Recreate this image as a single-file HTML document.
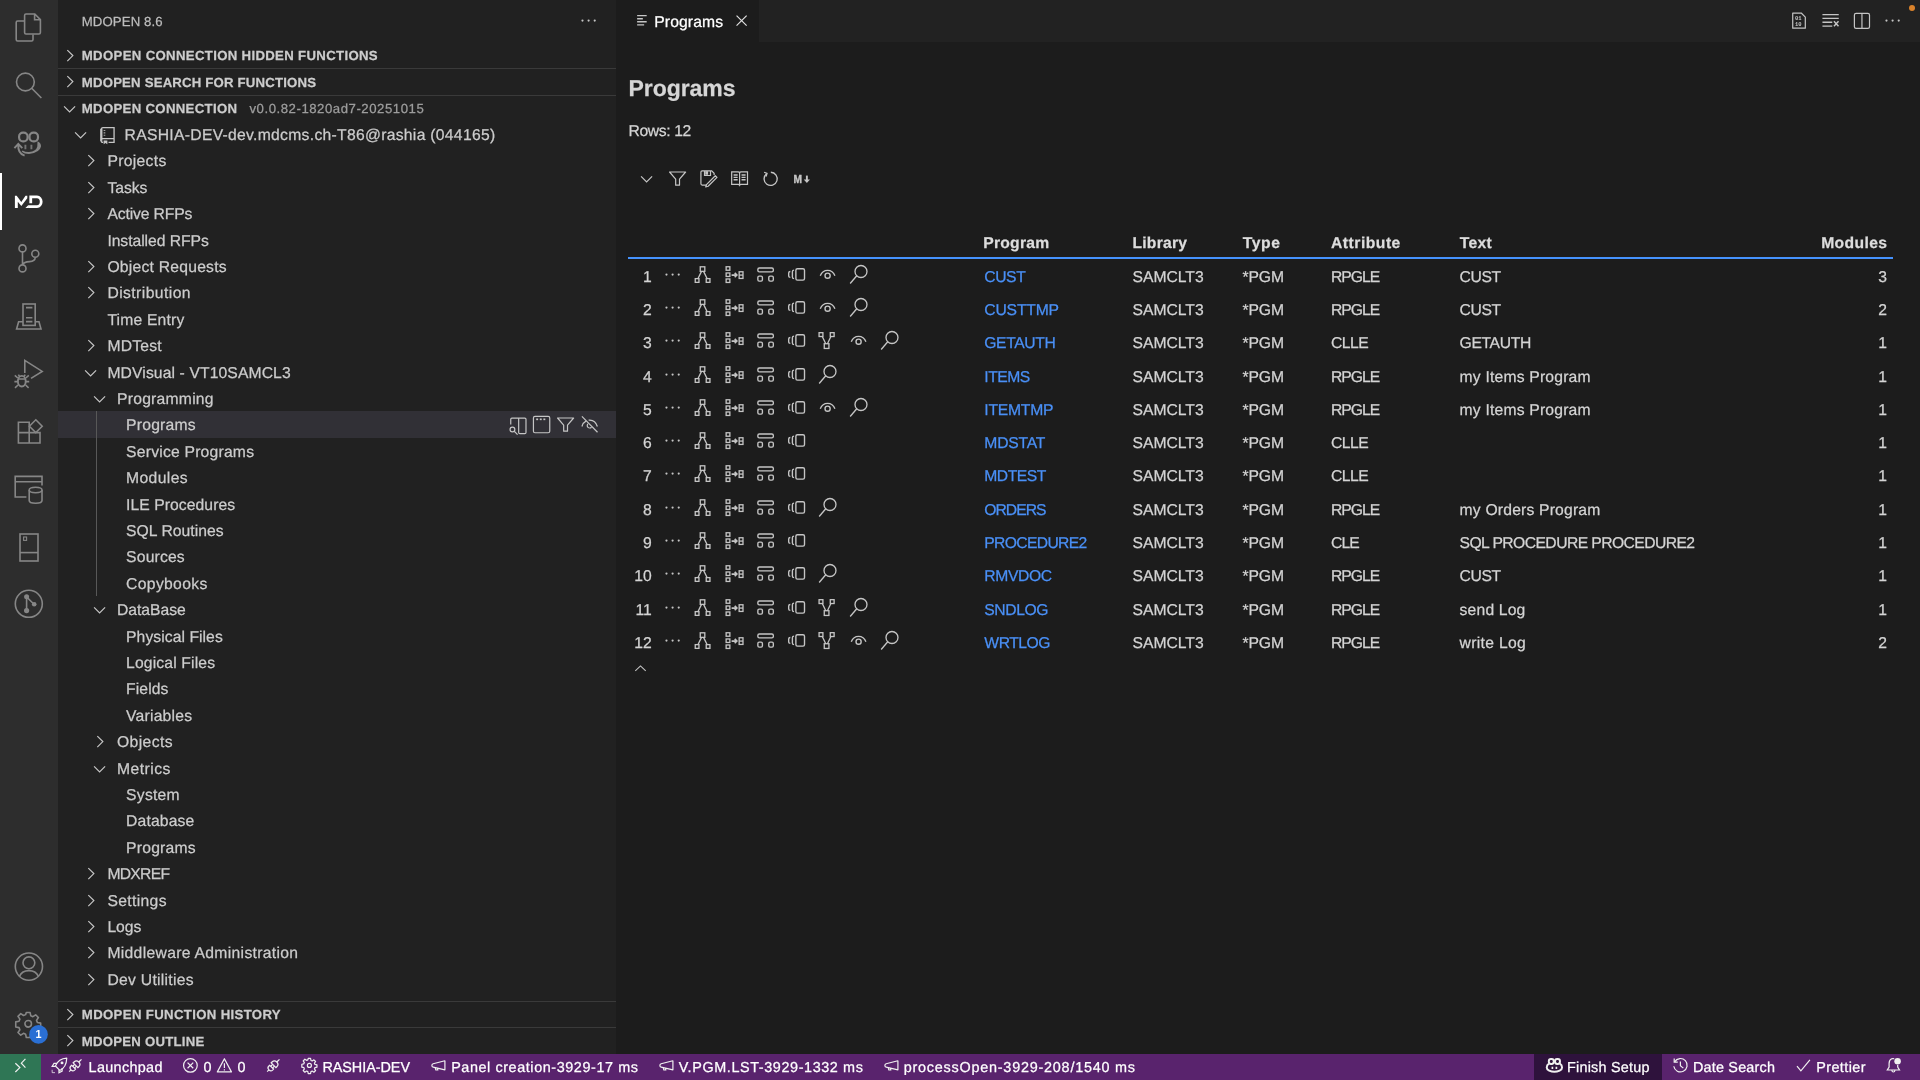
<!DOCTYPE html>
<html lang="en"><head><meta charset="utf-8"><title>Programs</title>
<style>
html,body{margin:0;padding:0;}
body{width:1920px;height:1080px;overflow:hidden;background:#1c1c1c;position:relative;font-family:"Liberation Sans",sans-serif;}
.b{position:absolute;}
.t{position:absolute;white-space:nowrap;line-height:24px;height:24px;}
.i{position:absolute;overflow:visible;}
svg{fill:none;stroke:currentColor;stroke-width:1;}
.f{fill:currentColor;stroke:none;}
#w{position:absolute;left:0;top:0;width:1920px;height:1080px;will-change:transform;}
.t{-webkit-text-stroke:0.25px currentColor;text-rendering:geometricPrecision;}
</style></head><body><div id="w">
<div class="b" style="left:0px;top:0px;width:58px;height:1053.6px;background:#2d2d2d;"></div>
<div class="b" style="left:58px;top:0px;width:558px;height:1053.6px;background:#212121;"></div>
<div class="b" style="left:616px;top:0px;width:1304px;height:42px;background:#222222;"></div>
<div class="b" style="left:616px;top:0px;width:143px;height:42px;background:#1c1c1c;"></div>
<div class="b" style="left:0px;top:1053.6px;width:1920px;height:26.4px;background:#59236d;"></div>
<div class="b" style="left:0px;top:1053.6px;width:41px;height:26.4px;background:#2f7655;"></div>
<div class="b" style="left:1533.8px;top:1053.6px;width:128.2px;height:26.4px;background:#2e123c;"></div>
<div class="b" style="left:0px;top:172.8px;width:2.4px;height:57.6px;background:#ffffff;"></div>
<svg class="i" style="left:0;top:0;width:58px;height:1054px;color:#868686;stroke-width:1.6" viewBox="0 0 58 1054">
<!-- files -->
<path d="M24.4 21H17.600Q16.200 21 16.200 22.400V39.600Q16.200 41 17.600 41H31.600Q33 41 33 39.600V34.600"/>
<path d="M24.600 15.400Q24.600 14 26 14H34.800L40.400 19.600V32.600Q40.400 34 39 34H26Q24.600 34 24.600 32.600ZM34.600 14.200V19.800H40.200"/>
<!-- search -->
<circle cx="25.400" cy="82" r="8.900"/><path d="M31.700 88.300 41.400 98"/>
<!-- copilot w/ arrow -->
<rect x="19.1" y="132.7" width="8.500" height="8.600" rx="3.900" stroke-width="2.200"/><rect x="29.500" y="132.700" width="8.500" height="8.600" rx="3.900" stroke-width="2.200"/>
<path class="f" d="M37.500 141.200Q41.300 143 41 146.600Q40 152.600 29 154Q24.400 154 21.700 151.700L22.500 150.500Q25.500 152.200 29 152Q36.300 151 37.300 146.400Z"/>
<path d="M25.400 144.800V149.200M31.400 144.800V149.200" stroke-width="1.900" opacity=".8"/>
<path d="M14.400 148.200 18.300 143.800 22.300 148.200M18.300 144.200Q17.600 153.400 24.600 155.600" stroke-width="1.900"/>
<!-- source control -->
<circle cx="22.500" cy="248.400" r="3.500"/><circle cx="35.300" cy="253.800" r="3.500"/><circle cx="22.500" cy="268.400" r="3.500"/>
<path d="M22.500 252V264.800M35.300 257.400Q35 261.400 29.600 261.600Q24 262 22.600 264.600"/>
<!-- remote explorer -->
<rect x="23" y="304" width="12.200" height="21.400"/><path d="M26 307.600H32.400M26 317.800H32.400M26 321.600H32.400"/>
<path d="M23 321.800H18.600L16.600 329H41L39 321.800H35.200"/>
<!-- run and debug -->
<path d="M24.800 373V360.400L42.200 371.400 31 378.400"/>
<ellipse cx="21.800" cy="381.200" rx="3.900" ry="5.300" stroke-width="1.900"/><path d="M18.200 379H25.400M17.800 378 14.800 375.400M17.800 381.600H14.400M18 385 15 387.800M25.800 378 28.800 375.400M25.800 381.600H29.200M25.600 385 28.600 387.800M19.600 376.600 18.400 374.600M24 376.600 25.200 374.600" stroke-width="1.600"/>
<!-- extensions -->
<path d="M29.200 422.200H18.400V443H40V432.600H29.200ZM18.400 432.600H29.200V443"/>
<path d="M35.800 419.800 42.200 426.200 35.800 432.600 29.400 426.200Z"/>
<!-- database window -->
<path d="M26.400 497H15.200V476.400H42V485.400M15.200 481.800H42"/>
<ellipse cx="35.600" cy="490" rx="6.400" ry="2.700"/><path d="M29.200 490V500.600A6.400 2.700 0 0 0 42 500.600V490"/>
<!-- project -->
<rect x="20" y="534" width="18" height="27"/><path d="M20 552.600H38"/><rect x="23.600" y="537" width="3" height="3.400" stroke-width="1.100"/>
<!-- git graph -->
<circle cx="28.800" cy="603.800" r="13.500"/>
<g class="f"><circle cx="26.600" cy="596.800" r="2.500"/><circle cx="34.200" cy="604.200" r="2.300"/><circle cx="26.600" cy="610.600" r="2.600"/></g>
<path d="M26.600 597V610M27 597.400 33.800 604"/>
<!-- account -->
<circle cx="28.900" cy="966.600" r="13.600"/><circle cx="28.900" cy="962.800" r="5.900"/><path d="M19.400 976.400Q22 970.600 28.900 970.600T38.400 976.400"/>
<!-- gear -->
<g transform="translate(28.200 1023.800) scale(1.730) translate(-8 -8)" stroke-width=".92"><circle cx="8" cy="8" r="1.900"/><path d="M6.900 1.500h2.200l.4 1.900 1.200.5 1.600-1.100 1.600 1.600-1.100 1.600.5 1.200 1.900.4v2.200l-1.900.4-.5 1.200 1.100 1.600-1.600 1.600-1.600-1.100-1.200.5-.4 1.900H6.900l-.4-1.900-1.200-.5-1.600 1.100-1.600-1.600 1.100-1.600-.5-1.200-1.900-.4V6.900l1.900-.4.5-1.200-1.100-1.600 1.600-1.600 1.600 1.100 1.200-.5z" stroke-linejoin="round"/></g>
<!-- MD logo (active) -->
<g fill="#ffffff" stroke="none"><path d="M14.9 207.9V195.7H16.7L21.3 201.9 25.5 195.85H27.3V198.2L21.3 205.9 17.8 201.7V207.9Z"/><path d="M28.2 205.15V207.95H25.4Z"/></g><path d="M30.75 203.3V196.8H37A4.4 4.88 0 0 1 37 206.55H28.1" stroke="#ffffff" stroke-width="2.800" stroke-linejoin="miter" fill="none"/>
<!-- badge -->
<circle cx="38.500" cy="1034.400" r="9.300" fill="#2a6fd4" stroke="none"/>
<text x="38.500" y="1038.300" text-anchor="middle" font-family="Liberation Sans, sans-serif" font-size="10.800" font-weight="700" fill="#ffffff" stroke="none">1</text>
</svg>
<span class="t" style="left:81.70px;top:10px;font-size:13.2px;color:#bdbdbd;letter-spacing:0.118px;">MDOPEN 8.6</span>
<svg class="i" viewBox="0 0 16 16" style="left:578.80px;top:10.70px;width:19.2px;height:19.2px;color:#c5c5c5;"><g class="f"><circle cx="2.9" cy="8" r=".92"/><circle cx="8" cy="8" r=".92"/><circle cx="13.1" cy="8" r=".92"/></g></svg>
<svg class="i" viewBox="0 0 16 16" style="left:60.10px;top:45.80px;width:19.2px;height:19.2px;color:#c5c5c5;"><path d="M6.1 3.4 10.7 8 6.1 12.6"/></svg>
<span class="t" style="left:81.80px;top:44px;font-size:13.2px;font-weight:700;color:#cccccc;letter-spacing:0.328px;">MDOPEN CONNECTION HIDDEN FUNCTIONS</span>
<div class="b" style="left:58px;top:68px;width:558px;height:1px;background:#3a3a3a;"></div>
<svg class="i" viewBox="0 0 16 16" style="left:60.10px;top:71.80px;width:19.2px;height:19.2px;color:#c5c5c5;"><path d="M6.1 3.4 10.7 8 6.1 12.6"/></svg>
<span class="t" style="left:81.80px;top:71px;font-size:13.2px;font-weight:700;color:#cccccc;letter-spacing:0.189px;">MDOPEN SEARCH FOR FUNCTIONS</span>
<div class="b" style="left:58px;top:95px;width:558px;height:1px;background:#3a3a3a;"></div>
<svg class="i" viewBox="0 0 16 16" style="left:60.10px;top:99.00px;width:19.2px;height:19.2px;color:#c5c5c5;"><path d="M3.4 6.1 8 10.7 12.6 6.1"/></svg>
<span class="t" style="left:81.80px;top:97px;font-size:13.2px;font-weight:700;color:#cccccc;letter-spacing:0.311px;">MDOPEN CONNECTION</span>
<span class="t" style="left:249.50px;top:97px;font-size:13.2px;color:#9d9d9d;letter-spacing:0.530px;">v0.0.82-1820ad7-20251015</span>
<div class="b" style="left:58px;top:1001px;width:558px;height:1px;background:#3a3a3a;"></div>
<svg class="i" viewBox="0 0 16 16" style="left:60.10px;top:1004.80px;width:19.2px;height:19.2px;color:#c5c5c5;"><path d="M6.1 3.4 10.7 8 6.1 12.6"/></svg>
<span class="t" style="left:81.80px;top:1003px;font-size:13.2px;font-weight:700;color:#cccccc;letter-spacing:0.346px;">MDOPEN FUNCTION HISTORY</span>
<div class="b" style="left:58px;top:1027px;width:558px;height:1px;background:#3a3a3a;"></div>
<svg class="i" viewBox="0 0 16 16" style="left:60.10px;top:1031.00px;width:19.2px;height:19.2px;color:#c5c5c5;"><path d="M6.1 3.4 10.7 8 6.1 12.6"/></svg>
<span class="t" style="left:81.80px;top:1030px;font-size:13.2px;font-weight:700;color:#cccccc;letter-spacing:0.240px;">MDOPEN OUTLINE</span>
<div class="b" style="left:58px;top:411px;width:558px;height:27px;background:#313036;"></div>
<div class="b" style="left:96px;top:411px;width:1px;height:185px;background:#585858;"></div>
<svg class="i" viewBox="0 0 16 16" style="left:71.30px;top:125.10px;width:19.2px;height:19.2px;color:#c5c5c5;"><path d="M3.4 6.1 8 10.7 12.6 6.1"/></svg>
<svg class="i" viewBox="0 0 16 16" style="left:97.60px;top:125.80px;width:19.2px;height:19.2px;color:#c5c5c5;"><path d="M2.900 2.500Q2.900 1.400 4.100 1.400H13.400V13.700H8.800M3 10.600H13.400M2.500 11.500Q2.300 13.600 4.300 13.700" stroke-width="1.100"/><path d="M2.750 2.300V12.300" stroke-width="1.900"/><path class="f" d="M4.700 12.100H7.800V15.200L6.250 14.100 4.700 15.200Z"/><path d="M4.700 3.800H6.100M4.700 5.700H6.100M4.700 7.700H6.100" stroke-width=".9" opacity=".8"/></svg>
<span class="t" style="left:124.60px;top:124px;font-size:15.7px;color:#cccccc;letter-spacing:0.293px;">RASHIA-DEV-dev.mdcms.ch-T86@rashia (044165)</span>
<svg class="i" viewBox="0 0 16 16" style="left:80.60px;top:151.10px;width:19.2px;height:19.2px;color:#c5c5c5;"><path d="M6.1 3.4 10.7 8 6.1 12.6"/></svg>
<span class="t" style="left:107.40px;top:150px;font-size:15.7px;color:#cccccc;letter-spacing:0.311px;">Projects</span>
<svg class="i" viewBox="0 0 16 16" style="left:80.60px;top:178.10px;width:19.2px;height:19.2px;color:#c5c5c5;"><path d="M6.1 3.4 10.7 8 6.1 12.6"/></svg>
<span class="t" style="left:107.40px;top:177px;font-size:15.7px;color:#cccccc;letter-spacing:-0.022px;">Tasks</span>
<svg class="i" viewBox="0 0 16 16" style="left:80.60px;top:204.10px;width:19.2px;height:19.2px;color:#c5c5c5;"><path d="M6.1 3.4 10.7 8 6.1 12.6"/></svg>
<span class="t" style="left:107.40px;top:203px;font-size:15.7px;color:#cccccc;letter-spacing:-0.123px;">Active RFPs</span>
<span class="t" style="left:107.40px;top:230px;font-size:15.7px;color:#cccccc;letter-spacing:-0.050px;">Installed RFPs</span>
<svg class="i" viewBox="0 0 16 16" style="left:80.60px;top:257.10px;width:19.2px;height:19.2px;color:#c5c5c5;"><path d="M6.1 3.4 10.7 8 6.1 12.6"/></svg>
<span class="t" style="left:107.40px;top:256px;font-size:15.7px;color:#cccccc;letter-spacing:0.232px;">Object Requests</span>
<svg class="i" viewBox="0 0 16 16" style="left:80.60px;top:283.10px;width:19.2px;height:19.2px;color:#c5c5c5;"><path d="M6.1 3.4 10.7 8 6.1 12.6"/></svg>
<span class="t" style="left:107.40px;top:282px;font-size:15.7px;color:#cccccc;letter-spacing:0.423px;">Distribution</span>
<span class="t" style="left:107.40px;top:309px;font-size:15.7px;color:#cccccc;letter-spacing:0.184px;">Time Entry</span>
<svg class="i" viewBox="0 0 16 16" style="left:80.60px;top:336.10px;width:19.2px;height:19.2px;color:#c5c5c5;"><path d="M6.1 3.4 10.7 8 6.1 12.6"/></svg>
<span class="t" style="left:107.40px;top:335px;font-size:15.7px;color:#cccccc;letter-spacing:0.212px;">MDTest</span>
<svg class="i" viewBox="0 0 16 16" style="left:80.60px;top:363.10px;width:19.2px;height:19.2px;color:#c5c5c5;"><path d="M3.4 6.1 8 10.7 12.6 6.1"/></svg>
<span class="t" style="left:107.40px;top:362px;font-size:15.7px;color:#cccccc;letter-spacing:0.111px;">MDVisual - VT10SAMCL3</span>
<svg class="i" viewBox="0 0 16 16" style="left:90.20px;top:389.10px;width:19.2px;height:19.2px;color:#c5c5c5;"><path d="M3.4 6.1 8 10.7 12.6 6.1"/></svg>
<span class="t" style="left:117.00px;top:388px;font-size:15.7px;color:#cccccc;letter-spacing:0.239px;">Programming</span>
<span class="t" style="left:126.10px;top:414px;font-size:15.7px;color:#cccccc;letter-spacing:0.223px;">Programs</span>
<span class="t" style="left:126.10px;top:441px;font-size:15.7px;color:#cccccc;letter-spacing:0.215px;">Service Programs</span>
<span class="t" style="left:126.10px;top:467px;font-size:15.7px;color:#cccccc;letter-spacing:0.365px;">Modules</span>
<span class="t" style="left:126.10px;top:494px;font-size:15.7px;color:#cccccc;letter-spacing:0.065px;">ILE Procedures</span>
<span class="t" style="left:126.10px;top:520px;font-size:15.7px;color:#cccccc;letter-spacing:0.029px;">SQL Routines</span>
<span class="t" style="left:126.10px;top:546px;font-size:15.7px;color:#cccccc;letter-spacing:0.172px;">Sources</span>
<span class="t" style="left:126.10px;top:573px;font-size:15.7px;color:#cccccc;letter-spacing:0.335px;">Copybooks</span>
<svg class="i" viewBox="0 0 16 16" style="left:90.20px;top:600.10px;width:19.2px;height:19.2px;color:#c5c5c5;"><path d="M3.4 6.1 8 10.7 12.6 6.1"/></svg>
<span class="t" style="left:117.00px;top:599px;font-size:15.7px;color:#cccccc;letter-spacing:-0.030px;">DataBase</span>
<span class="t" style="left:126.10px;top:626px;font-size:15.7px;color:#cccccc;letter-spacing:0.057px;">Physical Files</span>
<span class="t" style="left:126.10px;top:652px;font-size:15.7px;color:#cccccc;letter-spacing:0.145px;">Logical Files</span>
<span class="t" style="left:126.10px;top:678px;font-size:15.7px;color:#cccccc;letter-spacing:0.089px;">Fields</span>
<span class="t" style="left:126.10px;top:705px;font-size:15.7px;color:#cccccc;letter-spacing:0.208px;">Variables</span>
<svg class="i" viewBox="0 0 16 16" style="left:90.20px;top:732.10px;width:19.2px;height:19.2px;color:#c5c5c5;"><path d="M6.1 3.4 10.7 8 6.1 12.6"/></svg>
<span class="t" style="left:117.00px;top:731px;font-size:15.7px;color:#cccccc;letter-spacing:0.382px;">Objects</span>
<svg class="i" viewBox="0 0 16 16" style="left:90.20px;top:759.10px;width:19.2px;height:19.2px;color:#c5c5c5;"><path d="M3.4 6.1 8 10.7 12.6 6.1"/></svg>
<span class="t" style="left:117.00px;top:758px;font-size:15.7px;color:#cccccc;letter-spacing:0.480px;">Metrics</span>
<span class="t" style="left:126.10px;top:784px;font-size:15.7px;color:#cccccc;letter-spacing:0.248px;">System</span>
<span class="t" style="left:126.10px;top:810px;font-size:15.7px;color:#cccccc;letter-spacing:0.157px;">Database</span>
<span class="t" style="left:126.10px;top:837px;font-size:15.7px;color:#cccccc;letter-spacing:0.223px;">Programs</span>
<svg class="i" viewBox="0 0 16 16" style="left:80.60px;top:864.10px;width:19.2px;height:19.2px;color:#c5c5c5;"><path d="M6.1 3.4 10.7 8 6.1 12.6"/></svg>
<span class="t" style="left:107.40px;top:863px;font-size:15.7px;color:#cccccc;letter-spacing:-0.709px;">MDXREF</span>
<svg class="i" viewBox="0 0 16 16" style="left:80.60px;top:891.10px;width:19.2px;height:19.2px;color:#c5c5c5;"><path d="M6.1 3.4 10.7 8 6.1 12.6"/></svg>
<span class="t" style="left:107.40px;top:890px;font-size:15.7px;color:#cccccc;letter-spacing:0.353px;">Settings</span>
<svg class="i" viewBox="0 0 16 16" style="left:80.60px;top:917.10px;width:19.2px;height:19.2px;color:#c5c5c5;"><path d="M6.1 3.4 10.7 8 6.1 12.6"/></svg>
<span class="t" style="left:107.40px;top:916px;font-size:15.7px;color:#cccccc;letter-spacing:-0.005px;">Logs</span>
<svg class="i" viewBox="0 0 16 16" style="left:80.60px;top:943.10px;width:19.2px;height:19.2px;color:#c5c5c5;"><path d="M6.1 3.4 10.7 8 6.1 12.6"/></svg>
<span class="t" style="left:107.40px;top:942px;font-size:15.7px;color:#cccccc;letter-spacing:0.314px;">Middleware Administration</span>
<svg class="i" viewBox="0 0 16 16" style="left:80.60px;top:970.10px;width:19.2px;height:19.2px;color:#c5c5c5;"><path d="M6.1 3.4 10.7 8 6.1 12.6"/></svg>
<span class="t" style="left:107.40px;top:969px;font-size:15.7px;color:#cccccc;letter-spacing:0.282px;">Dev Utilities</span>
<svg class="i" viewBox="0 0 16 16" style="left:508.10px;top:415.50px;width:19.2px;height:19.2px;color:#c5c5c5;"><path d="M8.9 1.7H14Q15 1.7 15 2.7V13.7Q15 14.7 14 14.7H9.9Q8.9 14.7 8.9 13.7ZM8.9 1.7H3.3Q2.3 1.7 2.3 2.7V7"/><circle cx="3.7" cy="11.2" r="2"/><path d="M5.2 12.7 8 15.5"/></svg>
<svg class="i" viewBox="0 0 16 16" style="left:531.90px;top:415.00px;width:19.2px;height:19.2px;color:#c5c5c5;"><rect x="1.2" y="1.2" width="13.6" height="13.6" rx="1.3"/><g class="f"><rect x="3.5" y="2.9" width="1.6" height="1.4"/><rect x="6.5" y="2.9" width="1.6" height="1.4"/><rect x="9.5" y="2.9" width="1.6" height="1.4"/></g></svg>
<svg class="i" viewBox="0 0 16 16" style="left:556.00px;top:414.80px;width:19.2px;height:19.2px;color:#c5c5c5;"><path d="M1.3 2.5H14.7L9.6 8.5V13.5H6.4V8.5Z" stroke-linejoin="round"/></svg>
<svg class="i" viewBox="0 0 16 16" style="left:580.10px;top:415.20px;width:19.2px;height:19.2px;color:#c5c5c5;"><path d="M1.6 9.6C2.3 7.3 3.6 5.7 5.2 4.9M7.2 4.3C10.6 3.9 13.3 5.8 14.5 9.6"/><path d="M6.6 7.4A2 2 0 1 0 9.6 10.2"/><path d="M1.6 1.2 14.6 14.4"/></svg>
<svg class="i" viewBox="0 0 16 16" style="left:634.70px;top:12.10px;width:17px;height:17px;color:#c5c5c5;"><path d="M2 3.4H11M2 6.3H7.4M2 9.2H11M2 12.1H8.6" stroke-width="1.3"/></svg>
<span class="t" style="left:654.30px;top:11px;font-size:15.7px;color:#ffffff;letter-spacing:0.107px;">Programs</span>
<svg class="i" viewBox="0 0 16 16" style="left:732.30px;top:10.90px;width:19.2px;height:19.2px;color:#e0e0e0;"><path d="M3.8 3.8 12.2 12.2M12.2 3.8 3.8 12.2"/></svg>
<svg class="i" viewBox="0 0 16 16" style="left:1789.40px;top:10.90px;width:19.2px;height:19.2px;color:#c5c5c5;"><path d="M3.100 1.700H10.200L13.600 5.100V14.300H3.100Z" stroke-linejoin="round"/><g font-family="Liberation Mono, monospace" font-size="4.600" font-weight="700" fill="currentColor" stroke="none"><text x="5" y="7.600">01</text><text x="5" y="12.600">10</text></g></svg>
<svg class="i" viewBox="0 0 16 16" style="left:1820.60px;top:11.00px;width:19.2px;height:19.2px;color:#c5c5c5;"><path d="M1.2 3H14.8M1.2 6.2H14.8M1.2 9.4H9.4M1.2 12.6H9.4" stroke-width="1.1"/><path d="M10.8 8.6 14.6 12.8M14.6 8.6 10.8 12.8" stroke-width="1.2"/></svg>
<svg class="i" viewBox="0 0 16 16" style="left:1852.40px;top:11.40px;width:19.2px;height:19.2px;color:#c5c5c5;"><rect x="2" y="1.900" width="12.600" height="12.600" rx="1.400"/><path d="M8.300 1.900V14.500"/></svg>
<svg class="i" viewBox="0 0 16 16" style="left:1882.80px;top:10.90px;width:19.2px;height:19.2px;color:#c5c5c5;"><g class="f"><circle cx="2.9" cy="8" r=".92"/><circle cx="8" cy="8" r=".92"/><circle cx="13.1" cy="8" r=".92"/></g></svg>
<div class="b" style="left:1908.7px;top:4.7px;width:6.6px;height:6.6px;border-radius:50%;background:#d9822b"></div>
<span class="t" style="left:628.60px;top:76px;font-size:23px;font-weight:700;color:#d6d6d6;letter-spacing:-0.077px;">Programs</span>
<span class="t" style="left:628.50px;top:120px;font-size:15.7px;color:#d4d4d4;letter-spacing:-0.372px;">Rows: 12</span>
<svg class="i" viewBox="0 0 16 16" style="left:637.00px;top:169.30px;width:19.2px;height:19.2px;color:#c5c5c5;"><path d="M3.4 6.1 8 10.7 12.6 6.1"/></svg>
<svg class="i" viewBox="0 0 16 16" style="left:668.00px;top:168.70px;width:19.2px;height:19.2px;color:#c5c5c5;"><path d="M1.3 2.5H14.7L9.6 8.5V13.5H6.4V8.5Z" stroke-linejoin="round"/></svg>
<svg class="i" viewBox="0 0 16 16" style="left:699.00px;top:168.70px;width:19.2px;height:19.2px;color:#c5c5c5;"><path d="M6.3 13.4H2.6Q1.6 13.4 1.6 12.4V2.6Q1.6 1.6 2.6 1.6H10.6L12.6 3.6V5"/><path d="M4.6 1.6V5.4H9.6V1.6"/><path class="f" d="M5.2 1.8h2.4v3h-2.4z"/><path d="M13.6 5.6 15 7 7.6 14.4 5.6 15 6.2 13Z" stroke-linejoin="round"/></svg>
<svg class="i" viewBox="0 0 16 16" style="left:730.00px;top:168.70px;width:19.2px;height:19.2px;color:#c5c5c5;"><path d="M8 3.2V13.6M8 3.2Q7.6 2.4 6.8 2.4H1.4V12.8H6.8Q7.6 12.8 8 13.6Q8.4 12.8 9.2 12.8H14.6V2.4H9.2Q8.4 2.4 8 3.2"/><path d="M3 5h3.4M3 7h3.4M3 9h3.4M9.6 5H13M9.6 7H13M9.6 9H13" stroke-width="1.2"/></svg>
<svg class="i" viewBox="0 0 16 16" style="left:761.00px;top:168.70px;width:19.2px;height:19.2px;color:#c5c5c5;"><g stroke-width="1.100"><path d="M4.600 3.900A5.500 5.500 0 1 0 8.200 2.700"/><path d="M2.600 2.700 5 3.700 4.200 6.200"/></g></svg>
<svg class="i" viewBox="0 0 16 16" style="left:792.00px;top:168.70px;width:19.2px;height:19.2px;color:#c5c5c5;"><text x="1.300" y="11.550" font-family="Liberation Sans, sans-serif" font-weight="700" font-size="8.500" fill="currentColor" stroke="currentColor" stroke-width=".300">M</text><path d="M12.400 5.500V9.500" stroke-width="1.600"/><path class="f" d="M9.800 8.700H15L12.400 11.700Z"/></svg>
<span class="t" style="left:983.20px;top:232px;font-size:15.7px;font-weight:700;color:#dddddd;letter-spacing:0.260px;">Program</span>
<span class="t" style="left:1132.40px;top:232px;font-size:15.7px;font-weight:700;color:#dddddd;letter-spacing:0.249px;">Library</span>
<span class="t" style="left:1242.70px;top:232px;font-size:15.7px;font-weight:700;color:#dddddd;letter-spacing:0.615px;">Type</span>
<span class="t" style="left:1331.00px;top:232px;font-size:15.7px;font-weight:700;color:#dddddd;letter-spacing:0.499px;">Attribute</span>
<span class="t" style="left:1459.80px;top:232px;font-size:15.7px;font-weight:700;color:#dddddd;letter-spacing:0.260px;">Text</span>
<span class="t" style="right:32.70px;top:232px;font-size:15.7px;font-weight:700;color:#dddddd;letter-spacing:0.366px;">Modules</span>
<div class="b" style="left:628px;top:256.8px;width:1265px;height:2.4px;background:#4592fd;"></div>
<span class="t" style="right:1268.20px;top:266px;font-size:15.7px;color:#d4d4d4;">1</span>
<svg class="i" viewBox="0 0 16 16" style="left:662.70px;top:264.85px;width:19.2px;height:19.2px;color:#c5c5c5;"><g class="f"><circle cx="2.9" cy="8" r=".92"/><circle cx="8" cy="8" r=".92"/><circle cx="13.1" cy="8" r=".92"/></g></svg>
<svg class="i" viewBox="0 0 16 16" style="left:693.30px;top:264.85px;width:19.2px;height:19.2px;color:#c5c5c5;"><g stroke-width="1.1"><rect x="6.05" y="1.5" width="3.8" height="3.8"/><rect x="1.87" y="11.37" width="3.1" height="3.1"/><rect x="11.03" y="11.37" width="3.1" height="3.1"/><path d="M7.1 5.3 4.1 11.4M8.8 5.3 11.8 11.4"/></g></svg>
<svg class="i" viewBox="0 0 16 16" style="left:725.40px;top:264.85px;width:19.2px;height:19.2px;color:#c5c5c5;"><g stroke-width="1.1"><rect x=".95" y="1.47" width="3.1" height="2.9"/><rect x=".95" y="6.65" width="3.1" height="2.9"/><rect x=".95" y="11.65" width="3.1" height="2.9"/><rect x="11.8" y="5.65" width="3.2" height="5.55"/><path d="M11.8 8.4h3.2"/><path d="M5.5 8.4H9.6M8.1 6.6 9.9 8.4 8.1 10.2" stroke-width="1.35"/></g></svg>
<svg class="i" viewBox="0 0 16 16" style="left:755.70px;top:264.85px;width:19.2px;height:19.2px;color:#c5c5c5;"><g stroke-width="1.15"><rect x="1.55" y="2.55" width="12.9" height="3.2" rx="1.2"/><rect x="1.55" y="9.3" width="3.8" height="4.1" rx="1.1"/><rect x="10.65" y="9.3" width="3.8" height="4.1" rx="1.1"/></g></svg>
<svg class="i" viewBox="0 0 16 16" style="left:786.80px;top:264.85px;width:19.2px;height:19.2px;color:#c5c5c5;"><g stroke-width="1.15"><rect x="7.4" y="3.1" width="7.2" height="9.5" rx="1.3"/><path d="M5.9 4.3Q4.5 4.3 4.5 5.6V10.1Q4.5 11.4 5.9 11.4M2.8 5.4Q1.400 5.4 1.400 6.600V9.100Q1.400 10.300 2.800 10.300"/></g></svg>
<svg class="i" viewBox="0 0 16 16" style="left:818.00px;top:264.85px;width:19.2px;height:19.2px;color:#c5c5c5;"><g stroke-width="1.15"><path d="M1.9 9C3.2 5.700 5.700 4.500 8 4.500S12.800 5.700 14.100 9"/><circle cx="8" cy="8.9" r="2.150"/></g></svg>
<svg class="i" viewBox="0 0 16 16" style="left:848.40px;top:264.85px;width:19.2px;height:19.2px;color:#c5c5c5;"><g stroke-width="1.1"><circle cx="10.830" cy="5.420" r="5"/><path d="M7.300 8.960 1.800 15.400"/></g></svg>
<span class="t" style="left:984.30px;top:266px;font-size:15.7px;color:#4a90f7;letter-spacing:-0.430px;">CUST</span>
<span class="t" style="left:1132.60px;top:266px;font-size:15.7px;color:#d4d4d4;letter-spacing:-0.029px;">SAMCLT3</span>
<span class="t" style="left:1242.50px;top:266px;font-size:15.7px;color:#d4d4d4;letter-spacing:-0.117px;">*PGM</span>
<span class="t" style="left:1331.00px;top:266px;font-size:15.7px;color:#d4d4d4;letter-spacing:-1.018px;">RPGLE</span>
<span class="t" style="left:1459.60px;top:266px;font-size:15.7px;color:#d4d4d4;letter-spacing:-0.373px;">CUST</span>
<span class="t" style="right:33.00px;top:266px;font-size:15.7px;color:#d4d4d4;">3</span>
<span class="t" style="right:1268.20px;top:299px;font-size:15.7px;color:#d4d4d4;">2</span>
<svg class="i" viewBox="0 0 16 16" style="left:662.70px;top:297.85px;width:19.2px;height:19.2px;color:#c5c5c5;"><g class="f"><circle cx="2.9" cy="8" r=".92"/><circle cx="8" cy="8" r=".92"/><circle cx="13.1" cy="8" r=".92"/></g></svg>
<svg class="i" viewBox="0 0 16 16" style="left:693.30px;top:297.85px;width:19.2px;height:19.2px;color:#c5c5c5;"><g stroke-width="1.1"><rect x="6.05" y="1.5" width="3.8" height="3.8"/><rect x="1.87" y="11.37" width="3.1" height="3.1"/><rect x="11.03" y="11.37" width="3.1" height="3.1"/><path d="M7.1 5.3 4.1 11.4M8.8 5.3 11.8 11.4"/></g></svg>
<svg class="i" viewBox="0 0 16 16" style="left:725.40px;top:297.85px;width:19.2px;height:19.2px;color:#c5c5c5;"><g stroke-width="1.1"><rect x=".95" y="1.47" width="3.1" height="2.9"/><rect x=".95" y="6.65" width="3.1" height="2.9"/><rect x=".95" y="11.65" width="3.1" height="2.9"/><rect x="11.8" y="5.65" width="3.2" height="5.55"/><path d="M11.8 8.4h3.2"/><path d="M5.5 8.4H9.6M8.1 6.6 9.9 8.4 8.1 10.2" stroke-width="1.35"/></g></svg>
<svg class="i" viewBox="0 0 16 16" style="left:755.70px;top:297.85px;width:19.2px;height:19.2px;color:#c5c5c5;"><g stroke-width="1.15"><rect x="1.55" y="2.55" width="12.9" height="3.2" rx="1.2"/><rect x="1.55" y="9.3" width="3.8" height="4.1" rx="1.1"/><rect x="10.65" y="9.3" width="3.8" height="4.1" rx="1.1"/></g></svg>
<svg class="i" viewBox="0 0 16 16" style="left:786.80px;top:297.85px;width:19.2px;height:19.2px;color:#c5c5c5;"><g stroke-width="1.15"><rect x="7.4" y="3.1" width="7.2" height="9.5" rx="1.3"/><path d="M5.9 4.3Q4.5 4.3 4.5 5.6V10.1Q4.5 11.4 5.9 11.4M2.8 5.4Q1.400 5.4 1.400 6.600V9.100Q1.400 10.300 2.800 10.300"/></g></svg>
<svg class="i" viewBox="0 0 16 16" style="left:818.00px;top:297.85px;width:19.2px;height:19.2px;color:#c5c5c5;"><g stroke-width="1.15"><path d="M1.9 9C3.2 5.700 5.700 4.500 8 4.500S12.800 5.700 14.100 9"/><circle cx="8" cy="8.9" r="2.150"/></g></svg>
<svg class="i" viewBox="0 0 16 16" style="left:848.40px;top:297.85px;width:19.2px;height:19.2px;color:#c5c5c5;"><g stroke-width="1.1"><circle cx="10.830" cy="5.420" r="5"/><path d="M7.300 8.960 1.800 15.400"/></g></svg>
<span class="t" style="left:984.30px;top:299px;font-size:15.7px;color:#4a90f7;letter-spacing:-0.177px;">CUSTTMP</span>
<span class="t" style="left:1132.60px;top:299px;font-size:15.7px;color:#d4d4d4;letter-spacing:-0.029px;">SAMCLT3</span>
<span class="t" style="left:1242.50px;top:299px;font-size:15.7px;color:#d4d4d4;letter-spacing:-0.117px;">*PGM</span>
<span class="t" style="left:1331.00px;top:299px;font-size:15.7px;color:#d4d4d4;letter-spacing:-1.018px;">RPGLE</span>
<span class="t" style="left:1459.60px;top:299px;font-size:15.7px;color:#d4d4d4;letter-spacing:-0.373px;">CUST</span>
<span class="t" style="right:33.00px;top:299px;font-size:15.7px;color:#d4d4d4;">2</span>
<span class="t" style="right:1268.20px;top:332px;font-size:15.7px;color:#d4d4d4;">3</span>
<svg class="i" viewBox="0 0 16 16" style="left:662.70px;top:330.85px;width:19.2px;height:19.2px;color:#c5c5c5;"><g class="f"><circle cx="2.9" cy="8" r=".92"/><circle cx="8" cy="8" r=".92"/><circle cx="13.1" cy="8" r=".92"/></g></svg>
<svg class="i" viewBox="0 0 16 16" style="left:693.30px;top:330.85px;width:19.2px;height:19.2px;color:#c5c5c5;"><g stroke-width="1.1"><rect x="6.05" y="1.5" width="3.8" height="3.8"/><rect x="1.87" y="11.37" width="3.1" height="3.1"/><rect x="11.03" y="11.37" width="3.1" height="3.1"/><path d="M7.1 5.3 4.1 11.4M8.8 5.3 11.8 11.4"/></g></svg>
<svg class="i" viewBox="0 0 16 16" style="left:725.40px;top:330.85px;width:19.2px;height:19.2px;color:#c5c5c5;"><g stroke-width="1.1"><rect x=".95" y="1.47" width="3.1" height="2.9"/><rect x=".95" y="6.65" width="3.1" height="2.9"/><rect x=".95" y="11.65" width="3.1" height="2.9"/><rect x="11.8" y="5.65" width="3.2" height="5.55"/><path d="M11.8 8.4h3.2"/><path d="M5.5 8.4H9.6M8.1 6.6 9.9 8.4 8.1 10.2" stroke-width="1.35"/></g></svg>
<svg class="i" viewBox="0 0 16 16" style="left:755.70px;top:330.85px;width:19.2px;height:19.2px;color:#c5c5c5;"><g stroke-width="1.15"><rect x="1.55" y="2.55" width="12.9" height="3.2" rx="1.2"/><rect x="1.55" y="9.3" width="3.8" height="4.1" rx="1.1"/><rect x="10.65" y="9.3" width="3.8" height="4.1" rx="1.1"/></g></svg>
<svg class="i" viewBox="0 0 16 16" style="left:786.80px;top:330.85px;width:19.2px;height:19.2px;color:#c5c5c5;"><g stroke-width="1.15"><rect x="7.4" y="3.1" width="7.2" height="9.5" rx="1.3"/><path d="M5.9 4.3Q4.5 4.3 4.5 5.6V10.1Q4.5 11.4 5.9 11.4M2.8 5.4Q1.400 5.4 1.400 6.600V9.100Q1.400 10.300 2.800 10.300"/></g></svg>
<svg class="i" viewBox="0 0 16 16" style="left:817.40px;top:330.85px;width:19.2px;height:19.2px;color:#c5c5c5;"><g stroke-width="1.1"><rect x="1.73" y="1.4" width="3.2" height="3.2"/><rect x="11.07" y="1.4" width="3.2" height="3.2"/><rect x="6.05" y="10.600" width="3.9" height="3.950"/><path d="M4.400 4.600 7.300 10.600M11.600 4.600 8.700 10.600"/></g></svg>
<svg class="i" viewBox="0 0 16 16" style="left:849.00px;top:330.85px;width:19.2px;height:19.2px;color:#c5c5c5;"><g stroke-width="1.15"><path d="M1.9 9C3.2 5.700 5.700 4.500 8 4.500S12.800 5.700 14.100 9"/><circle cx="8" cy="8.9" r="2.150"/></g></svg>
<svg class="i" viewBox="0 0 16 16" style="left:879.40px;top:330.85px;width:19.2px;height:19.2px;color:#c5c5c5;"><g stroke-width="1.1"><circle cx="10.830" cy="5.420" r="5"/><path d="M7.300 8.960 1.800 15.400"/></g></svg>
<span class="t" style="left:984.30px;top:332px;font-size:15.7px;color:#4a90f7;letter-spacing:-0.377px;">GETAUTH</span>
<span class="t" style="left:1132.60px;top:332px;font-size:15.7px;color:#d4d4d4;letter-spacing:-0.029px;">SAMCLT3</span>
<span class="t" style="left:1242.50px;top:332px;font-size:15.7px;color:#d4d4d4;letter-spacing:-0.117px;">*PGM</span>
<span class="t" style="left:1331.00px;top:332px;font-size:15.7px;color:#d4d4d4;letter-spacing:-0.498px;">CLLE</span>
<span class="t" style="left:1459.60px;top:332px;font-size:15.7px;color:#d4d4d4;letter-spacing:-0.352px;">GETAUTH</span>
<span class="t" style="right:33.00px;top:332px;font-size:15.7px;color:#d4d4d4;">1</span>
<span class="t" style="right:1268.20px;top:366px;font-size:15.7px;color:#d4d4d4;">4</span>
<svg class="i" viewBox="0 0 16 16" style="left:662.70px;top:364.85px;width:19.2px;height:19.2px;color:#c5c5c5;"><g class="f"><circle cx="2.9" cy="8" r=".92"/><circle cx="8" cy="8" r=".92"/><circle cx="13.1" cy="8" r=".92"/></g></svg>
<svg class="i" viewBox="0 0 16 16" style="left:693.30px;top:364.85px;width:19.2px;height:19.2px;color:#c5c5c5;"><g stroke-width="1.1"><rect x="6.05" y="1.5" width="3.8" height="3.8"/><rect x="1.87" y="11.37" width="3.1" height="3.1"/><rect x="11.03" y="11.37" width="3.1" height="3.1"/><path d="M7.1 5.3 4.1 11.4M8.8 5.3 11.8 11.4"/></g></svg>
<svg class="i" viewBox="0 0 16 16" style="left:725.40px;top:364.85px;width:19.2px;height:19.2px;color:#c5c5c5;"><g stroke-width="1.1"><rect x=".95" y="1.47" width="3.1" height="2.9"/><rect x=".95" y="6.65" width="3.1" height="2.9"/><rect x=".95" y="11.65" width="3.1" height="2.9"/><rect x="11.8" y="5.65" width="3.2" height="5.55"/><path d="M11.8 8.4h3.2"/><path d="M5.5 8.4H9.6M8.1 6.6 9.9 8.4 8.1 10.2" stroke-width="1.35"/></g></svg>
<svg class="i" viewBox="0 0 16 16" style="left:755.70px;top:364.85px;width:19.2px;height:19.2px;color:#c5c5c5;"><g stroke-width="1.15"><rect x="1.55" y="2.55" width="12.9" height="3.2" rx="1.2"/><rect x="1.55" y="9.3" width="3.8" height="4.1" rx="1.1"/><rect x="10.65" y="9.3" width="3.8" height="4.1" rx="1.1"/></g></svg>
<svg class="i" viewBox="0 0 16 16" style="left:786.80px;top:364.85px;width:19.2px;height:19.2px;color:#c5c5c5;"><g stroke-width="1.15"><rect x="7.4" y="3.1" width="7.2" height="9.5" rx="1.3"/><path d="M5.9 4.3Q4.5 4.3 4.5 5.6V10.1Q4.5 11.4 5.9 11.4M2.8 5.4Q1.400 5.4 1.400 6.600V9.100Q1.400 10.300 2.800 10.300"/></g></svg>
<svg class="i" viewBox="0 0 16 16" style="left:817.40px;top:364.85px;width:19.2px;height:19.2px;color:#c5c5c5;"><g stroke-width="1.1"><circle cx="10.830" cy="5.420" r="5"/><path d="M7.300 8.960 1.800 15.400"/></g></svg>
<span class="t" style="left:984.30px;top:366px;font-size:15.7px;color:#4a90f7;letter-spacing:-0.504px;">ITEMS</span>
<span class="t" style="left:1132.60px;top:366px;font-size:15.7px;color:#d4d4d4;letter-spacing:-0.029px;">SAMCLT3</span>
<span class="t" style="left:1242.50px;top:366px;font-size:15.7px;color:#d4d4d4;letter-spacing:-0.117px;">*PGM</span>
<span class="t" style="left:1331.00px;top:366px;font-size:15.7px;color:#d4d4d4;letter-spacing:-1.018px;">RPGLE</span>
<span class="t" style="left:1459.60px;top:366px;font-size:15.7px;color:#d4d4d4;letter-spacing:0.191px;">my Items Program</span>
<span class="t" style="right:33.00px;top:366px;font-size:15.7px;color:#d4d4d4;">1</span>
<span class="t" style="right:1268.20px;top:399px;font-size:15.7px;color:#d4d4d4;">5</span>
<svg class="i" viewBox="0 0 16 16" style="left:662.70px;top:397.85px;width:19.2px;height:19.2px;color:#c5c5c5;"><g class="f"><circle cx="2.9" cy="8" r=".92"/><circle cx="8" cy="8" r=".92"/><circle cx="13.1" cy="8" r=".92"/></g></svg>
<svg class="i" viewBox="0 0 16 16" style="left:693.30px;top:397.85px;width:19.2px;height:19.2px;color:#c5c5c5;"><g stroke-width="1.1"><rect x="6.05" y="1.5" width="3.8" height="3.8"/><rect x="1.87" y="11.37" width="3.1" height="3.1"/><rect x="11.03" y="11.37" width="3.1" height="3.1"/><path d="M7.1 5.3 4.1 11.4M8.8 5.3 11.8 11.4"/></g></svg>
<svg class="i" viewBox="0 0 16 16" style="left:725.40px;top:397.85px;width:19.2px;height:19.2px;color:#c5c5c5;"><g stroke-width="1.1"><rect x=".95" y="1.47" width="3.1" height="2.9"/><rect x=".95" y="6.65" width="3.1" height="2.9"/><rect x=".95" y="11.65" width="3.1" height="2.9"/><rect x="11.8" y="5.65" width="3.2" height="5.55"/><path d="M11.8 8.4h3.2"/><path d="M5.5 8.4H9.6M8.1 6.6 9.9 8.4 8.1 10.2" stroke-width="1.35"/></g></svg>
<svg class="i" viewBox="0 0 16 16" style="left:755.70px;top:397.85px;width:19.2px;height:19.2px;color:#c5c5c5;"><g stroke-width="1.15"><rect x="1.55" y="2.55" width="12.9" height="3.2" rx="1.2"/><rect x="1.55" y="9.3" width="3.8" height="4.1" rx="1.1"/><rect x="10.65" y="9.3" width="3.8" height="4.1" rx="1.1"/></g></svg>
<svg class="i" viewBox="0 0 16 16" style="left:786.80px;top:397.85px;width:19.2px;height:19.2px;color:#c5c5c5;"><g stroke-width="1.15"><rect x="7.4" y="3.1" width="7.2" height="9.5" rx="1.3"/><path d="M5.9 4.3Q4.5 4.3 4.5 5.6V10.1Q4.5 11.4 5.9 11.4M2.8 5.4Q1.400 5.4 1.400 6.600V9.100Q1.400 10.300 2.800 10.300"/></g></svg>
<svg class="i" viewBox="0 0 16 16" style="left:818.00px;top:397.85px;width:19.2px;height:19.2px;color:#c5c5c5;"><g stroke-width="1.15"><path d="M1.9 9C3.2 5.700 5.700 4.500 8 4.500S12.800 5.700 14.100 9"/><circle cx="8" cy="8.9" r="2.150"/></g></svg>
<svg class="i" viewBox="0 0 16 16" style="left:848.40px;top:397.85px;width:19.2px;height:19.2px;color:#c5c5c5;"><g stroke-width="1.1"><circle cx="10.830" cy="5.420" r="5"/><path d="M7.300 8.960 1.800 15.400"/></g></svg>
<span class="t" style="left:984.30px;top:399px;font-size:15.7px;color:#4a90f7;letter-spacing:-0.244px;">ITEMTMP</span>
<span class="t" style="left:1132.60px;top:399px;font-size:15.7px;color:#d4d4d4;letter-spacing:-0.029px;">SAMCLT3</span>
<span class="t" style="left:1242.50px;top:399px;font-size:15.7px;color:#d4d4d4;letter-spacing:-0.117px;">*PGM</span>
<span class="t" style="left:1331.00px;top:399px;font-size:15.7px;color:#d4d4d4;letter-spacing:-1.018px;">RPGLE</span>
<span class="t" style="left:1459.60px;top:399px;font-size:15.7px;color:#d4d4d4;letter-spacing:0.191px;">my Items Program</span>
<span class="t" style="right:33.00px;top:399px;font-size:15.7px;color:#d4d4d4;">1</span>
<span class="t" style="right:1268.20px;top:432px;font-size:15.7px;color:#d4d4d4;">6</span>
<svg class="i" viewBox="0 0 16 16" style="left:662.70px;top:430.85px;width:19.2px;height:19.2px;color:#c5c5c5;"><g class="f"><circle cx="2.9" cy="8" r=".92"/><circle cx="8" cy="8" r=".92"/><circle cx="13.1" cy="8" r=".92"/></g></svg>
<svg class="i" viewBox="0 0 16 16" style="left:693.30px;top:430.85px;width:19.2px;height:19.2px;color:#c5c5c5;"><g stroke-width="1.1"><rect x="6.05" y="1.5" width="3.8" height="3.8"/><rect x="1.87" y="11.37" width="3.1" height="3.1"/><rect x="11.03" y="11.37" width="3.1" height="3.1"/><path d="M7.1 5.3 4.1 11.4M8.8 5.3 11.8 11.4"/></g></svg>
<svg class="i" viewBox="0 0 16 16" style="left:725.40px;top:430.85px;width:19.2px;height:19.2px;color:#c5c5c5;"><g stroke-width="1.1"><rect x=".95" y="1.47" width="3.1" height="2.9"/><rect x=".95" y="6.65" width="3.1" height="2.9"/><rect x=".95" y="11.65" width="3.1" height="2.9"/><rect x="11.8" y="5.65" width="3.2" height="5.55"/><path d="M11.8 8.4h3.2"/><path d="M5.5 8.4H9.6M8.1 6.6 9.9 8.4 8.1 10.2" stroke-width="1.35"/></g></svg>
<svg class="i" viewBox="0 0 16 16" style="left:755.70px;top:430.85px;width:19.2px;height:19.2px;color:#c5c5c5;"><g stroke-width="1.15"><rect x="1.55" y="2.55" width="12.9" height="3.2" rx="1.2"/><rect x="1.55" y="9.3" width="3.8" height="4.1" rx="1.1"/><rect x="10.65" y="9.3" width="3.8" height="4.1" rx="1.1"/></g></svg>
<svg class="i" viewBox="0 0 16 16" style="left:786.80px;top:430.85px;width:19.2px;height:19.2px;color:#c5c5c5;"><g stroke-width="1.15"><rect x="7.4" y="3.1" width="7.2" height="9.5" rx="1.3"/><path d="M5.9 4.3Q4.5 4.3 4.5 5.6V10.1Q4.5 11.4 5.9 11.4M2.8 5.4Q1.400 5.4 1.400 6.600V9.100Q1.400 10.300 2.800 10.300"/></g></svg>
<span class="t" style="left:984.30px;top:432px;font-size:15.7px;color:#4a90f7;letter-spacing:-0.211px;">MDSTAT</span>
<span class="t" style="left:1132.60px;top:432px;font-size:15.7px;color:#d4d4d4;letter-spacing:-0.029px;">SAMCLT3</span>
<span class="t" style="left:1242.50px;top:432px;font-size:15.7px;color:#d4d4d4;letter-spacing:-0.117px;">*PGM</span>
<span class="t" style="left:1331.00px;top:432px;font-size:15.7px;color:#d4d4d4;letter-spacing:-0.498px;">CLLE</span>
<span class="t" style="right:33.00px;top:432px;font-size:15.7px;color:#d4d4d4;">1</span>
<span class="t" style="right:1268.20px;top:465px;font-size:15.7px;color:#d4d4d4;">7</span>
<svg class="i" viewBox="0 0 16 16" style="left:662.70px;top:463.85px;width:19.2px;height:19.2px;color:#c5c5c5;"><g class="f"><circle cx="2.9" cy="8" r=".92"/><circle cx="8" cy="8" r=".92"/><circle cx="13.1" cy="8" r=".92"/></g></svg>
<svg class="i" viewBox="0 0 16 16" style="left:693.30px;top:463.85px;width:19.2px;height:19.2px;color:#c5c5c5;"><g stroke-width="1.1"><rect x="6.05" y="1.5" width="3.8" height="3.8"/><rect x="1.87" y="11.37" width="3.1" height="3.1"/><rect x="11.03" y="11.37" width="3.1" height="3.1"/><path d="M7.1 5.3 4.1 11.4M8.8 5.3 11.8 11.4"/></g></svg>
<svg class="i" viewBox="0 0 16 16" style="left:725.40px;top:463.85px;width:19.2px;height:19.2px;color:#c5c5c5;"><g stroke-width="1.1"><rect x=".95" y="1.47" width="3.1" height="2.9"/><rect x=".95" y="6.65" width="3.1" height="2.9"/><rect x=".95" y="11.65" width="3.1" height="2.9"/><rect x="11.8" y="5.65" width="3.2" height="5.55"/><path d="M11.8 8.4h3.2"/><path d="M5.5 8.4H9.6M8.1 6.6 9.9 8.4 8.1 10.2" stroke-width="1.35"/></g></svg>
<svg class="i" viewBox="0 0 16 16" style="left:755.70px;top:463.85px;width:19.2px;height:19.2px;color:#c5c5c5;"><g stroke-width="1.15"><rect x="1.55" y="2.55" width="12.9" height="3.2" rx="1.2"/><rect x="1.55" y="9.3" width="3.8" height="4.1" rx="1.1"/><rect x="10.65" y="9.3" width="3.8" height="4.1" rx="1.1"/></g></svg>
<svg class="i" viewBox="0 0 16 16" style="left:786.80px;top:463.85px;width:19.2px;height:19.2px;color:#c5c5c5;"><g stroke-width="1.15"><rect x="7.4" y="3.1" width="7.2" height="9.5" rx="1.3"/><path d="M5.9 4.3Q4.5 4.3 4.5 5.6V10.1Q4.5 11.4 5.9 11.4M2.8 5.4Q1.400 5.4 1.400 6.600V9.100Q1.400 10.300 2.800 10.300"/></g></svg>
<span class="t" style="left:984.30px;top:465px;font-size:15.7px;color:#4a90f7;letter-spacing:-0.513px;">MDTEST</span>
<span class="t" style="left:1132.60px;top:465px;font-size:15.7px;color:#d4d4d4;letter-spacing:-0.029px;">SAMCLT3</span>
<span class="t" style="left:1242.50px;top:465px;font-size:15.7px;color:#d4d4d4;letter-spacing:-0.117px;">*PGM</span>
<span class="t" style="left:1331.00px;top:465px;font-size:15.7px;color:#d4d4d4;letter-spacing:-0.498px;">CLLE</span>
<span class="t" style="right:33.00px;top:465px;font-size:15.7px;color:#d4d4d4;">1</span>
<span class="t" style="right:1268.20px;top:499px;font-size:15.7px;color:#d4d4d4;">8</span>
<svg class="i" viewBox="0 0 16 16" style="left:662.70px;top:497.85px;width:19.2px;height:19.2px;color:#c5c5c5;"><g class="f"><circle cx="2.9" cy="8" r=".92"/><circle cx="8" cy="8" r=".92"/><circle cx="13.1" cy="8" r=".92"/></g></svg>
<svg class="i" viewBox="0 0 16 16" style="left:693.30px;top:497.85px;width:19.2px;height:19.2px;color:#c5c5c5;"><g stroke-width="1.1"><rect x="6.05" y="1.5" width="3.8" height="3.8"/><rect x="1.87" y="11.37" width="3.1" height="3.1"/><rect x="11.03" y="11.37" width="3.1" height="3.1"/><path d="M7.1 5.3 4.1 11.4M8.8 5.3 11.8 11.4"/></g></svg>
<svg class="i" viewBox="0 0 16 16" style="left:725.40px;top:497.85px;width:19.2px;height:19.2px;color:#c5c5c5;"><g stroke-width="1.1"><rect x=".95" y="1.47" width="3.1" height="2.9"/><rect x=".95" y="6.65" width="3.1" height="2.9"/><rect x=".95" y="11.65" width="3.1" height="2.9"/><rect x="11.8" y="5.65" width="3.2" height="5.55"/><path d="M11.8 8.4h3.2"/><path d="M5.5 8.4H9.6M8.1 6.6 9.9 8.4 8.1 10.2" stroke-width="1.35"/></g></svg>
<svg class="i" viewBox="0 0 16 16" style="left:755.70px;top:497.85px;width:19.2px;height:19.2px;color:#c5c5c5;"><g stroke-width="1.15"><rect x="1.55" y="2.55" width="12.9" height="3.2" rx="1.2"/><rect x="1.55" y="9.3" width="3.8" height="4.1" rx="1.1"/><rect x="10.65" y="9.3" width="3.8" height="4.1" rx="1.1"/></g></svg>
<svg class="i" viewBox="0 0 16 16" style="left:786.80px;top:497.85px;width:19.2px;height:19.2px;color:#c5c5c5;"><g stroke-width="1.15"><rect x="7.4" y="3.1" width="7.2" height="9.5" rx="1.3"/><path d="M5.9 4.3Q4.5 4.3 4.5 5.6V10.1Q4.5 11.4 5.9 11.4M2.8 5.4Q1.400 5.4 1.400 6.600V9.100Q1.400 10.300 2.800 10.300"/></g></svg>
<svg class="i" viewBox="0 0 16 16" style="left:817.40px;top:497.85px;width:19.2px;height:19.2px;color:#c5c5c5;"><g stroke-width="1.1"><circle cx="10.830" cy="5.420" r="5"/><path d="M7.300 8.960 1.800 15.400"/></g></svg>
<span class="t" style="left:984.30px;top:499px;font-size:15.7px;color:#4a90f7;letter-spacing:-0.991px;">ORDERS</span>
<span class="t" style="left:1132.60px;top:499px;font-size:15.7px;color:#d4d4d4;letter-spacing:-0.029px;">SAMCLT3</span>
<span class="t" style="left:1242.50px;top:499px;font-size:15.7px;color:#d4d4d4;letter-spacing:-0.117px;">*PGM</span>
<span class="t" style="left:1331.00px;top:499px;font-size:15.7px;color:#d4d4d4;letter-spacing:-1.018px;">RPGLE</span>
<span class="t" style="left:1459.60px;top:499px;font-size:15.7px;color:#d4d4d4;letter-spacing:0.186px;">my Orders Program</span>
<span class="t" style="right:33.00px;top:499px;font-size:15.7px;color:#d4d4d4;">1</span>
<span class="t" style="right:1268.20px;top:532px;font-size:15.7px;color:#d4d4d4;">9</span>
<svg class="i" viewBox="0 0 16 16" style="left:662.70px;top:530.85px;width:19.2px;height:19.2px;color:#c5c5c5;"><g class="f"><circle cx="2.9" cy="8" r=".92"/><circle cx="8" cy="8" r=".92"/><circle cx="13.1" cy="8" r=".92"/></g></svg>
<svg class="i" viewBox="0 0 16 16" style="left:693.30px;top:530.85px;width:19.2px;height:19.2px;color:#c5c5c5;"><g stroke-width="1.1"><rect x="6.05" y="1.5" width="3.8" height="3.8"/><rect x="1.87" y="11.37" width="3.1" height="3.1"/><rect x="11.03" y="11.37" width="3.1" height="3.1"/><path d="M7.1 5.3 4.1 11.4M8.8 5.3 11.8 11.4"/></g></svg>
<svg class="i" viewBox="0 0 16 16" style="left:725.40px;top:530.85px;width:19.2px;height:19.2px;color:#c5c5c5;"><g stroke-width="1.1"><rect x=".95" y="1.47" width="3.1" height="2.9"/><rect x=".95" y="6.65" width="3.1" height="2.9"/><rect x=".95" y="11.65" width="3.1" height="2.9"/><rect x="11.8" y="5.65" width="3.2" height="5.55"/><path d="M11.8 8.4h3.2"/><path d="M5.5 8.4H9.6M8.1 6.6 9.9 8.4 8.1 10.2" stroke-width="1.35"/></g></svg>
<svg class="i" viewBox="0 0 16 16" style="left:755.70px;top:530.85px;width:19.2px;height:19.2px;color:#c5c5c5;"><g stroke-width="1.15"><rect x="1.55" y="2.55" width="12.9" height="3.2" rx="1.2"/><rect x="1.55" y="9.3" width="3.8" height="4.1" rx="1.1"/><rect x="10.65" y="9.3" width="3.8" height="4.1" rx="1.1"/></g></svg>
<svg class="i" viewBox="0 0 16 16" style="left:786.80px;top:530.85px;width:19.2px;height:19.2px;color:#c5c5c5;"><g stroke-width="1.15"><rect x="7.4" y="3.1" width="7.2" height="9.5" rx="1.3"/><path d="M5.9 4.3Q4.5 4.3 4.5 5.6V10.1Q4.5 11.4 5.9 11.4M2.8 5.4Q1.400 5.4 1.400 6.600V9.100Q1.400 10.300 2.800 10.300"/></g></svg>
<span class="t" style="left:984.30px;top:532px;font-size:15.7px;color:#4a90f7;letter-spacing:-0.663px;">PROCEDURE2</span>
<span class="t" style="left:1132.60px;top:532px;font-size:15.7px;color:#d4d4d4;letter-spacing:-0.029px;">SAMCLT3</span>
<span class="t" style="left:1242.50px;top:532px;font-size:15.7px;color:#d4d4d4;letter-spacing:-0.117px;">*PGM</span>
<span class="t" style="left:1331.00px;top:532px;font-size:15.7px;color:#d4d4d4;letter-spacing:-0.887px;">CLE</span>
<span class="t" style="left:1459.60px;top:532px;font-size:15.7px;color:#d4d4d4;letter-spacing:-0.575px;">SQL PROCEDURE PROCEDURE2</span>
<span class="t" style="right:33.00px;top:532px;font-size:15.7px;color:#d4d4d4;">1</span>
<span class="t" style="right:1268.20px;top:565px;font-size:15.7px;color:#d4d4d4;">10</span>
<svg class="i" viewBox="0 0 16 16" style="left:662.70px;top:563.85px;width:19.2px;height:19.2px;color:#c5c5c5;"><g class="f"><circle cx="2.9" cy="8" r=".92"/><circle cx="8" cy="8" r=".92"/><circle cx="13.1" cy="8" r=".92"/></g></svg>
<svg class="i" viewBox="0 0 16 16" style="left:693.30px;top:563.85px;width:19.2px;height:19.2px;color:#c5c5c5;"><g stroke-width="1.1"><rect x="6.05" y="1.5" width="3.8" height="3.8"/><rect x="1.87" y="11.37" width="3.1" height="3.1"/><rect x="11.03" y="11.37" width="3.1" height="3.1"/><path d="M7.1 5.3 4.1 11.4M8.8 5.3 11.8 11.4"/></g></svg>
<svg class="i" viewBox="0 0 16 16" style="left:725.40px;top:563.85px;width:19.2px;height:19.2px;color:#c5c5c5;"><g stroke-width="1.1"><rect x=".95" y="1.47" width="3.1" height="2.9"/><rect x=".95" y="6.65" width="3.1" height="2.9"/><rect x=".95" y="11.65" width="3.1" height="2.9"/><rect x="11.8" y="5.65" width="3.2" height="5.55"/><path d="M11.8 8.4h3.2"/><path d="M5.5 8.4H9.6M8.1 6.6 9.9 8.4 8.1 10.2" stroke-width="1.35"/></g></svg>
<svg class="i" viewBox="0 0 16 16" style="left:755.70px;top:563.85px;width:19.2px;height:19.2px;color:#c5c5c5;"><g stroke-width="1.15"><rect x="1.55" y="2.55" width="12.9" height="3.2" rx="1.2"/><rect x="1.55" y="9.3" width="3.8" height="4.1" rx="1.1"/><rect x="10.65" y="9.3" width="3.8" height="4.1" rx="1.1"/></g></svg>
<svg class="i" viewBox="0 0 16 16" style="left:786.80px;top:563.85px;width:19.2px;height:19.2px;color:#c5c5c5;"><g stroke-width="1.15"><rect x="7.4" y="3.1" width="7.2" height="9.5" rx="1.3"/><path d="M5.9 4.3Q4.5 4.3 4.5 5.6V10.1Q4.5 11.4 5.9 11.4M2.8 5.4Q1.400 5.4 1.400 6.600V9.100Q1.400 10.300 2.800 10.300"/></g></svg>
<svg class="i" viewBox="0 0 16 16" style="left:817.40px;top:563.85px;width:19.2px;height:19.2px;color:#c5c5c5;"><g stroke-width="1.1"><circle cx="10.830" cy="5.420" r="5"/><path d="M7.300 8.960 1.800 15.400"/></g></svg>
<span class="t" style="left:984.30px;top:565px;font-size:15.7px;color:#4a90f7;letter-spacing:-0.373px;">RMVDOC</span>
<span class="t" style="left:1132.60px;top:565px;font-size:15.7px;color:#d4d4d4;letter-spacing:-0.029px;">SAMCLT3</span>
<span class="t" style="left:1242.50px;top:565px;font-size:15.7px;color:#d4d4d4;letter-spacing:-0.117px;">*PGM</span>
<span class="t" style="left:1331.00px;top:565px;font-size:15.7px;color:#d4d4d4;letter-spacing:-1.018px;">RPGLE</span>
<span class="t" style="left:1459.60px;top:565px;font-size:15.7px;color:#d4d4d4;letter-spacing:-0.373px;">CUST</span>
<span class="t" style="right:33.00px;top:565px;font-size:15.7px;color:#d4d4d4;">1</span>
<span class="t" style="right:1268.20px;top:599px;font-size:15.7px;color:#d4d4d4;">11</span>
<svg class="i" viewBox="0 0 16 16" style="left:662.70px;top:597.85px;width:19.2px;height:19.2px;color:#c5c5c5;"><g class="f"><circle cx="2.9" cy="8" r=".92"/><circle cx="8" cy="8" r=".92"/><circle cx="13.1" cy="8" r=".92"/></g></svg>
<svg class="i" viewBox="0 0 16 16" style="left:693.30px;top:597.85px;width:19.2px;height:19.2px;color:#c5c5c5;"><g stroke-width="1.1"><rect x="6.05" y="1.5" width="3.8" height="3.8"/><rect x="1.87" y="11.37" width="3.1" height="3.1"/><rect x="11.03" y="11.37" width="3.1" height="3.1"/><path d="M7.1 5.3 4.1 11.4M8.8 5.3 11.8 11.4"/></g></svg>
<svg class="i" viewBox="0 0 16 16" style="left:725.40px;top:597.85px;width:19.2px;height:19.2px;color:#c5c5c5;"><g stroke-width="1.1"><rect x=".95" y="1.47" width="3.1" height="2.9"/><rect x=".95" y="6.65" width="3.1" height="2.9"/><rect x=".95" y="11.65" width="3.1" height="2.9"/><rect x="11.8" y="5.65" width="3.2" height="5.55"/><path d="M11.8 8.4h3.2"/><path d="M5.5 8.4H9.6M8.1 6.6 9.9 8.4 8.1 10.2" stroke-width="1.35"/></g></svg>
<svg class="i" viewBox="0 0 16 16" style="left:755.70px;top:597.85px;width:19.2px;height:19.2px;color:#c5c5c5;"><g stroke-width="1.15"><rect x="1.55" y="2.55" width="12.9" height="3.2" rx="1.2"/><rect x="1.55" y="9.3" width="3.8" height="4.1" rx="1.1"/><rect x="10.65" y="9.3" width="3.8" height="4.1" rx="1.1"/></g></svg>
<svg class="i" viewBox="0 0 16 16" style="left:786.80px;top:597.85px;width:19.2px;height:19.2px;color:#c5c5c5;"><g stroke-width="1.15"><rect x="7.4" y="3.1" width="7.2" height="9.5" rx="1.3"/><path d="M5.9 4.3Q4.5 4.3 4.5 5.6V10.1Q4.5 11.4 5.9 11.4M2.8 5.4Q1.400 5.4 1.400 6.600V9.100Q1.400 10.300 2.800 10.300"/></g></svg>
<svg class="i" viewBox="0 0 16 16" style="left:817.40px;top:597.85px;width:19.2px;height:19.2px;color:#c5c5c5;"><g stroke-width="1.1"><rect x="1.73" y="1.4" width="3.2" height="3.2"/><rect x="11.07" y="1.4" width="3.2" height="3.2"/><rect x="6.05" y="10.600" width="3.9" height="3.950"/><path d="M4.400 4.600 7.300 10.600M11.600 4.600 8.700 10.600"/></g></svg>
<svg class="i" viewBox="0 0 16 16" style="left:848.40px;top:597.85px;width:19.2px;height:19.2px;color:#c5c5c5;"><g stroke-width="1.1"><circle cx="10.830" cy="5.420" r="5"/><path d="M7.300 8.960 1.800 15.400"/></g></svg>
<span class="t" style="left:984.30px;top:599px;font-size:15.7px;color:#4a90f7;letter-spacing:-0.409px;">SNDLOG</span>
<span class="t" style="left:1132.60px;top:599px;font-size:15.7px;color:#d4d4d4;letter-spacing:-0.029px;">SAMCLT3</span>
<span class="t" style="left:1242.50px;top:599px;font-size:15.7px;color:#d4d4d4;letter-spacing:-0.117px;">*PGM</span>
<span class="t" style="left:1331.00px;top:599px;font-size:15.7px;color:#d4d4d4;letter-spacing:-1.018px;">RPGLE</span>
<span class="t" style="left:1459.60px;top:599px;font-size:15.7px;color:#d4d4d4;letter-spacing:0.167px;">send Log</span>
<span class="t" style="right:33.00px;top:599px;font-size:15.7px;color:#d4d4d4;">1</span>
<span class="t" style="right:1268.20px;top:632px;font-size:15.7px;color:#d4d4d4;">12</span>
<svg class="i" viewBox="0 0 16 16" style="left:662.70px;top:630.85px;width:19.2px;height:19.2px;color:#c5c5c5;"><g class="f"><circle cx="2.9" cy="8" r=".92"/><circle cx="8" cy="8" r=".92"/><circle cx="13.1" cy="8" r=".92"/></g></svg>
<svg class="i" viewBox="0 0 16 16" style="left:693.30px;top:630.85px;width:19.2px;height:19.2px;color:#c5c5c5;"><g stroke-width="1.1"><rect x="6.05" y="1.5" width="3.8" height="3.8"/><rect x="1.87" y="11.37" width="3.1" height="3.1"/><rect x="11.03" y="11.37" width="3.1" height="3.1"/><path d="M7.1 5.3 4.1 11.4M8.8 5.3 11.8 11.4"/></g></svg>
<svg class="i" viewBox="0 0 16 16" style="left:725.40px;top:630.85px;width:19.2px;height:19.2px;color:#c5c5c5;"><g stroke-width="1.1"><rect x=".95" y="1.47" width="3.1" height="2.9"/><rect x=".95" y="6.65" width="3.1" height="2.9"/><rect x=".95" y="11.65" width="3.1" height="2.9"/><rect x="11.8" y="5.65" width="3.2" height="5.55"/><path d="M11.8 8.4h3.2"/><path d="M5.5 8.4H9.6M8.1 6.6 9.9 8.4 8.1 10.2" stroke-width="1.35"/></g></svg>
<svg class="i" viewBox="0 0 16 16" style="left:755.70px;top:630.85px;width:19.2px;height:19.2px;color:#c5c5c5;"><g stroke-width="1.15"><rect x="1.55" y="2.55" width="12.9" height="3.2" rx="1.2"/><rect x="1.55" y="9.3" width="3.8" height="4.1" rx="1.1"/><rect x="10.65" y="9.3" width="3.8" height="4.1" rx="1.1"/></g></svg>
<svg class="i" viewBox="0 0 16 16" style="left:786.80px;top:630.85px;width:19.2px;height:19.2px;color:#c5c5c5;"><g stroke-width="1.15"><rect x="7.4" y="3.1" width="7.2" height="9.5" rx="1.3"/><path d="M5.9 4.3Q4.5 4.3 4.5 5.6V10.1Q4.5 11.4 5.9 11.4M2.8 5.4Q1.400 5.4 1.400 6.600V9.100Q1.400 10.300 2.800 10.300"/></g></svg>
<svg class="i" viewBox="0 0 16 16" style="left:817.40px;top:630.85px;width:19.2px;height:19.2px;color:#c5c5c5;"><g stroke-width="1.1"><rect x="1.73" y="1.4" width="3.2" height="3.2"/><rect x="11.07" y="1.4" width="3.2" height="3.2"/><rect x="6.05" y="10.600" width="3.9" height="3.950"/><path d="M4.400 4.600 7.300 10.600M11.600 4.600 8.700 10.600"/></g></svg>
<svg class="i" viewBox="0 0 16 16" style="left:849.00px;top:630.85px;width:19.2px;height:19.2px;color:#c5c5c5;"><g stroke-width="1.15"><path d="M1.9 9C3.2 5.700 5.700 4.500 8 4.500S12.800 5.700 14.100 9"/><circle cx="8" cy="8.9" r="2.150"/></g></svg>
<svg class="i" viewBox="0 0 16 16" style="left:879.40px;top:630.85px;width:19.2px;height:19.2px;color:#c5c5c5;"><g stroke-width="1.1"><circle cx="10.830" cy="5.420" r="5"/><path d="M7.300 8.960 1.800 15.400"/></g></svg>
<span class="t" style="left:984.30px;top:632px;font-size:15.7px;color:#4a90f7;letter-spacing:-0.466px;">WRTLOG</span>
<span class="t" style="left:1132.60px;top:632px;font-size:15.7px;color:#d4d4d4;letter-spacing:-0.029px;">SAMCLT3</span>
<span class="t" style="left:1242.50px;top:632px;font-size:15.7px;color:#d4d4d4;letter-spacing:-0.117px;">*PGM</span>
<span class="t" style="left:1331.00px;top:632px;font-size:15.7px;color:#d4d4d4;letter-spacing:-1.018px;">RPGLE</span>
<span class="t" style="left:1459.60px;top:632px;font-size:15.7px;color:#d4d4d4;letter-spacing:0.323px;">write Log</span>
<span class="t" style="right:33.00px;top:632px;font-size:15.7px;color:#d4d4d4;">2</span>
<svg class="i" viewBox="0 0 16 16" style="left:631.90px;top:660.10px;width:17px;height:17px;color:#c5c5c5;"><path d="M3.1 10.3 8 5.6 12.9 10.3"/></svg>
<svg class="i" viewBox="0 0 16 16" style="left:11.90px;top:1056.80px;width:16.8px;height:16.8px;color:#f0f0f0;"><path d="M3.2 5.9 7.500 10.100 3.200 14.300M12.800 1.800 8.900 5.900 12.800 10.100" stroke-width="1.150"/></svg>
<svg class="i" viewBox="0 0 16 16" style="left:50.90px;top:1057.10px;width:16.8px;height:16.8px;color:#f0f0f0;"><g stroke-width="1.150"><path d="M15 1.100C10 1.300 6.200 3.800 4.200 8.600L8.400 12.800C12.800 10.600 14.800 6.600 15 1.100Z" stroke-linejoin="round"/><path d="M5.700 6H2.900L1.100 9H4.200M10.600 10.500V13.400L7.600 15V12"/><circle class="f" cx="10.500" cy="5.600" r="1.400"/><path d="M1.100 12.200V14.900H3.800" stroke-width=".9" opacity=".8"/></g></svg>
<svg class="i" viewBox="0 0 16 16" style="left:67.10px;top:1056.70px;width:16.8px;height:16.8px;color:#f0f0f0;"><g transform="rotate(-45 8 8)" stroke-width="1.150"><path d="M-.400 8H2M12.600 8H16.200"/><path d="M5.600 5.400H4.300Q2 5.400 2 8Q2 10.600 4.300 10.600H5.600Z"/><path d="M5.600 6.800H8.200M5.600 9.200H8.200"/><path d="M8.200 4.800V11.200H9.400Q12.600 11.200 12.600 8Q12.600 4.800 9.400 4.800Z"/></g></svg>
<span class="t" style="left:88.60px;top:1056px;font-size:14.4px;color:#ffffff;letter-spacing:0.327px;">Launchpad</span>
<svg class="i" viewBox="0 0 16 16" style="left:182.10px;top:1057.30px;width:16.8px;height:16.8px;color:#f0f0f0;"><g stroke-width="1.150"><circle cx="8" cy="8" r="6.500"/><path d="M5.300 5.300 10.700 10.700M10.700 5.300 5.300 10.700"/></g></svg>
<span class="t" style="left:203.60px;top:1056px;font-size:14.4px;color:#ffffff;">0</span>
<svg class="i" viewBox="0 0 16 16" style="left:216.00px;top:1056.70px;width:16.8px;height:16.8px;color:#f0f0f0;"><g stroke-width="1.150"><path d="M8 1.600 14.700 14.200H1.300Z" stroke-linejoin="round"/><path d="M8 6V10.400M8 11.600V12.800"/></g></svg>
<span class="t" style="left:237.40px;top:1056px;font-size:14.4px;color:#ffffff;">0</span>
<svg class="i" viewBox="0 0 16 16" style="left:265.30px;top:1056.70px;width:16.8px;height:16.8px;color:#f0f0f0;"><g transform="rotate(-45 8 8)" stroke-width="1.150"><path d="M-.400 8H2M12.600 8H16.200"/><path d="M5.600 5.400H4.300Q2 5.400 2 8Q2 10.600 4.300 10.600H5.600Z"/><path d="M5.600 6.800H8.200M5.600 9.200H8.200"/><path d="M8.200 4.800V11.200H9.400Q12.600 11.200 12.600 8Q12.600 4.800 9.400 4.800Z"/></g></svg>
<svg class="i" viewBox="0 0 16 16" style="left:301.20px;top:1057.30px;width:16.8px;height:16.8px;color:#f0f0f0;"><g stroke-width="1.150"><circle cx="8" cy="8" r="1.900"/><path d="M6.900 1.400h2.200l.4 1.900 1.200.5 1.600-1.100 1.600 1.600-1.100 1.600.5 1.200 1.900.4v2.200l-1.900.4-.5 1.200 1.100 1.600-1.600 1.600-1.600-1.100-1.200.5-.4 1.900H6.900l-.4-1.900-1.200-.5-1.600 1.100-1.600-1.600 1.100-1.600-.5-1.200-1.900-.4V6.900l1.900-.4.5-1.200-1.100-1.600 1.600-1.600 1.600 1.100 1.200-.5z" stroke-linejoin="round"/></g></svg>
<span class="t" style="left:322.40px;top:1056px;font-size:14.4px;color:#ffffff;letter-spacing:-0.038px;">RASHIA-DEV</span>
<svg class="i" viewBox="0 0 16 16" style="left:429.60px;top:1057.40px;width:16.8px;height:16.8px;color:#f0f0f0;"><g stroke-width="1.150" stroke-linejoin="round"><path d="M14.200 3.600V12.200L3 9.600Q1.800 9.300 1.800 8Q1.800 6.700 3 6.400Z"/><path d="M5 10.100 5.600 12.400H7.500L7.100 10.600"/></g></svg>
<span class="t" style="left:451.20px;top:1056px;font-size:14.4px;color:#ffffff;letter-spacing:0.580px;">Panel creation-3929-17 ms</span>
<svg class="i" viewBox="0 0 16 16" style="left:658.20px;top:1057.40px;width:16.8px;height:16.8px;color:#f0f0f0;"><g stroke-width="1.150" stroke-linejoin="round"><path d="M14.200 3.600V12.200L3 9.600Q1.800 9.300 1.800 8Q1.800 6.700 3 6.400Z"/><path d="M5 10.100 5.600 12.400H7.500L7.100 10.600"/></g></svg>
<span class="t" style="left:678.70px;top:1056px;font-size:14.4px;color:#ffffff;letter-spacing:0.607px;">V.PGM.LST-3929-1332 ms</span>
<svg class="i" viewBox="0 0 16 16" style="left:883.20px;top:1057.40px;width:16.8px;height:16.8px;color:#f0f0f0;"><g stroke-width="1.150" stroke-linejoin="round"><path d="M14.200 3.600V12.200L3 9.600Q1.800 9.300 1.800 8Q1.800 6.700 3 6.400Z"/><path d="M5 10.100 5.600 12.400H7.500L7.100 10.600"/></g></svg>
<span class="t" style="left:903.70px;top:1056px;font-size:14.4px;color:#ffffff;letter-spacing:0.775px;">processOpen-3929-208/1540 ms</span>
<svg class="i" viewBox="0 0 16 16" style="left:1545.80px;top:1057.10px;width:16.8px;height:16.8px;color:#f0f0f0;"><g stroke-width="1.900"><rect x="2.700" y="2" width="4.700" height="4.600" rx="2"/><rect x="8.600" y="2" width="4.700" height="4.600" rx="2"/><path d="M2.800 6.300Q.700 7.400.700 10Q.700 12 3 13Q5.500 14.100 8 14.100Q10.500 14.100 13 13Q15.300 12 15.300 10Q15.300 7.400 13.200 6.300"/><path d="M6.100 9.400V11.400M9.900 9.400V11.400" stroke-width="1.600"/></g></svg>
<span class="t" style="left:1567.00px;top:1056px;font-size:14.4px;color:#ffffff;letter-spacing:0.218px;">Finish Setup</span>
<svg class="i" viewBox="0 0 16 16" style="left:1671.80px;top:1057.10px;width:16.8px;height:16.8px;color:#f0f0f0;"><g stroke-width="1.150"><path d="M2.500 4.600A6.400 6.400 0 1 1 1.700 8.800"/><path d="M2.100 1.500V4.900H5.500"/><path d="M8 4.400V8.300L10.800 10.600"/></g></svg>
<span class="t" style="left:1693.00px;top:1056px;font-size:14.4px;color:#ffffff;letter-spacing:0.191px;">Date Search</span>
<svg class="i" viewBox="0 0 16 16" style="left:1794.90px;top:1057.10px;width:16.8px;height:16.8px;color:#f0f0f0;"><path d="M1.900 8.700 5.600 13.200 14.200 2.800" stroke-width="1.150"/></svg>
<span class="t" style="left:1816.20px;top:1056px;font-size:14.4px;color:#ffffff;letter-spacing:0.416px;">Prettier</span>
<svg class="i" viewBox="0 0 16 16" style="left:1885.20px;top:1057.20px;width:16.8px;height:16.8px;color:#f0f0f0;"><g stroke-width="1.150"><path d="M8.800 1.700Q7.600 1.300 6.400 1.700Q3.900 2.700 3.900 6.200V9.600L2.200 12.400H13.800L12.100 9.600V7.600M6.500 12.600Q6.700 14.300 8 14.300Q9.300 14.300 9.500 12.600"/></g><circle class="f" cx="12" cy="4.100" r="3.100"/></svg>
</div></body></html>
